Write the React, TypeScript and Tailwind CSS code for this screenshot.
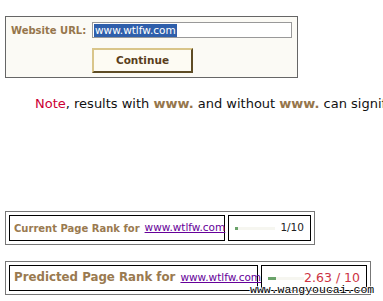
import React from "react";

const font = { fontFamily: '"DejaVu Sans", Verdana, sans-serif' };

const RankBox = ({
  label,
  big,
  value,
  bar,
}: {
  label: string;
  big?: boolean;
  value: string;
  bar: number;
}) => (
  <div className="ml-[5px] flex w-fit gap-[3px] border border-[#777] bg-white p-[3px]">
    <div
      className={`flex items-center whitespace-nowrap border border-black pl-[4px] ${
        big ? "h-[26px] w-[249px]" : "h-[26px] w-[216px]"
      }`}
    >
      <span
        className={`font-bold text-[#9a7a50] ${big ? "text-[11.8px]" : "text-[10px]"}`}
      >
        {label}
      </span>
      <a
        href="#"
        className={`ml-[5px] text-[#660099] underline ${big ? "text-[10.5px]" : "text-[10.5px]"}`}
      >
        www.wtlfw.com
      </a>
    </div>
    <div
      className={`flex items-center justify-between whitespace-nowrap border border-black pl-[6px] pr-[6px] ${
        big ? "h-[26px] w-[106px]" : "h-[26px] w-[83px]"
      }`}
    >
      <div className="flex h-[3px] w-[40px] bg-[#f6f6f0]">
        <div className="h-[3px] bg-[#6aa36a]" style={{ width: `${bar}px` }} />
      </div>
      <span
        className={big ? "text-[12.5px] text-[#cc3344]" : "text-[10.5px] text-[#222]"}
      >
        {value}
      </span>
    </div>
  </div>
);

export default function App() {
  return (
    <div
      className="relative h-[301px] w-[383px] overflow-hidden bg-white pt-[16px]"
      style={font}
    >
      <div className="ml-[5px] w-[293px] border border-[#666] bg-[#fbfaf5] px-[5px] pb-[4px] pt-[5px]">
        <div className="flex items-center">
          <span className="w-[81px] whitespace-nowrap text-[10px] font-bold text-[#96764c]">
            Website URL:
          </span>
          <div className="flex h-[16px] w-[200px] items-center border border-[#999] bg-white pl-[1px]">
            <span className="bg-[#2f5fab] px-[1px] text-[10.5px] leading-[13px] text-white">
              www.wtlfw.com
            </span>
          </div>
        </div>
        <button className="ml-[81px] mt-[10px] h-[25px] w-[101px] border-2 border-b-[#5e4c25] border-l-[#d9c58a] border-r-[#5e4c25] border-t-[#d9c58a] bg-[#fdfbf3] text-[10.5px] font-bold text-[#5a3e1b]">
          Continue
        </button>
      </div>

      <p className="ml-[35px] mt-[18px] whitespace-nowrap text-[13px] leading-[16px] text-[#111]">
        <span className="text-[#cc0033]">Note</span>, results with{" "}
        <b className="text-[#96764c]">www.</b> and without{" "}
        <b className="text-[#96764c]">www.</b> can significantly differ.
      </p>

      <div className="mt-[99px]">
        <RankBox label="Current Page Rank for" value="1/10" bar={3} />
      </div>
      <div className="mt-[16px]">
        <RankBox label="Predicted Page Rank for" big value="2.63 / 10" bar={8} />
      </div>

      <span
        className="absolute left-[250px] top-[281px] text-[11.5px] text-black"
        style={{
          fontFamily: '"Liberation Mono", monospace',
          textShadow: "1px 0 #fff, -1px 0 #fff, 0 1px #fff, 0 -1px #fff",
        }}
      >
        www.wangyoucai.com
      </span>
    </div>
  );
}
